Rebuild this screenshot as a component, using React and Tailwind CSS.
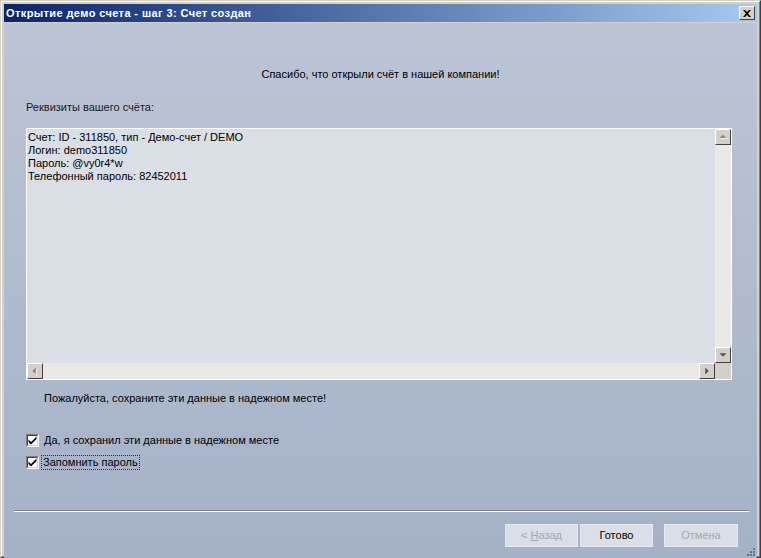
import React from "react";

function ScrollBtn({ dir, disabled, className = "" }) {
  const fill = disabled ? "#8a8a8a" : "#555555";
  const paths = {
    up: "M4 9 L8 5 L12 9 Z",
    down: "M4 6 L8 10 L12 6 Z",
    left: "M9 4 L5 8 L9 12 Z",
    right: "M6 4 L10 8 L6 12 Z",
  };
  return (
    <div
      className={
        "w-[16px] h-[16px] shrink-0 bg-[#d4d0c8] border border-t-white border-l-white border-r-[#404040] border-b-[#404040] flex items-center justify-center " +
        className
      }
    >
      <svg width="14" height="14" viewBox="0 0 16 16">
        {disabled && <path d={paths[dir]} fill="#ffffff" transform="translate(1 1)" />}
        <path d={paths[dir]} fill={fill} />
      </svg>
    </div>
  );
}

function Checkbox() {
  return (
    <div className="w-[13px] h-[13px] shrink-0 border border-t-[#808080] border-l-[#808080] border-r-white border-b-white">
      <div className="w-full h-full bg-white border border-t-[#404040] border-l-[#404040] border-r-[#d4d0c8] border-b-[#d4d0c8] flex items-center justify-center">
        <svg width="9" height="9" viewBox="0 0 9 9">
          <path d="M0.5 3.5 L3 6 L8.5 0.5 L8.5 3 L3 8.5 L0.5 6 Z" fill="#000" />
        </svg>
      </div>
    </div>
  );
}

function Button({ children, disabled }) {
  return (
    <div
      className={
        "h-[23px] flex items-center justify-center bg-[#d9dee7] border border-[#e6e9ee] " +
        (disabled ? "text-[#a3a8b0]" : "text-black")
      }
    >
      {children}
    </div>
  );
}

export default function App() {
  return (
    <div
      className="w-[761px] h-[558px] border border-t-[#d4d0c8] border-l-[#d4d0c8] border-r-[#404040] border-b-[#404040] text-[11px] leading-[13px]"
      style={{ fontFamily: '"Liberation Sans", Arial, sans-serif' }}
    >
      <div className="w-full h-full border border-t-white border-l-white border-r-[#808080] border-b-[#808080] bg-[#d4d0c8] p-[2px] flex flex-col">
        {/* title bar */}
        <div className="h-[18px] shrink-0 flex items-center justify-between bg-[linear-gradient(to_right,#0a246a,#a6caf0)] pl-[2px] pr-[2px]">
          <span className="text-white font-bold text-[11px] tracking-[0.4px]">
            Открытие демо счета - шаг 3: Счет создан
          </span>
          <div className="w-[16px] h-[14px] bg-[#d4d0c8] border border-t-white border-l-white border-r-[#404040] border-b-[#404040] flex items-center justify-center">
            <svg width="8" height="7" viewBox="0 0 8 7">
              <path d="M0 0 L2 0 L4 2 L6 0 L8 0 L5 3.5 L8 7 L6 7 L4 5 L2 7 L0 7 L3 3.5 Z" fill="#000" />
            </svg>
          </div>
        </div>
        {/* content */}
        <div className="mt-[1px] flex-1 flex flex-col bg-[linear-gradient(to_bottom,#bcc5d6,#a4b1c7)] text-black">
          <div className="mt-[45px] h-[13px] text-center">
            Спасибо, что открыли счёт в нашей компании!
          </div>
          <div className="mt-[20px] ml-[22px] h-[13px] text-[#1a1a1a]">Реквизиты вашего счёта:</div>
          {/* text box */}
          <div className="mt-[14px] ml-[22px] w-[706px] h-[252px] border border-white flex flex-col">
            <div className="flex-1 flex min-h-0">
              <div className="flex-1 bg-[#dadee5] pl-[1px] pt-[2px]">
                <div>Счет: ID - 311850, тип - Демо-счет / DEMO</div>
                <div>Логин: demo311850</div>
                <div>Пароль: @vy0r4*w</div>
                <div>Телефонный пароль: 82452011</div>
              </div>
              <div className="w-[16px] flex flex-col bg-[#ebe9e5]">
                <ScrollBtn dir="up" disabled />
                <div className="flex-1" />
                <ScrollBtn dir="down" />
              </div>
            </div>
            <div className="h-[16px] flex shrink-0">
              <div className="flex-1 flex bg-[#ebe9e5]">
                <ScrollBtn dir="left" disabled />
                <div className="flex-1" />
                <ScrollBtn dir="right" />
              </div>
              <div className="w-[16px] bg-[#d4d0c8]" />
            </div>
          </div>
          <div className="mt-[12px] ml-[40px] h-[13px]">
            Пожалуйста, сохраните эти данные в надежном месте!
          </div>
          <div className="mt-[29px] ml-[22px] flex items-center gap-[4px] h-[13px]">
            <Checkbox />
            <span className="ml-[1px]">Да, я сохранил эти данные в надежном месте</span>
          </div>
          <div className="mt-[9px] ml-[22px] flex items-center gap-[4px] h-[13px]">
            <Checkbox />
            <span className="ml-[-1px] px-[1px] outline outline-1 outline-dotted outline-[#333] outline-offset-0">
              Запомнить пароль
            </span>
          </div>
          {/* separator */}
          <div className="mt-[41px] ml-[10px] w-[735px] border-t border-t-[#7d8087] border-b border-b-white" />
          {/* buttons */}
          <div className="mt-[12px] flex ml-[501px]">
            <div className="w-[73px]">
              <Button disabled>
                &lt;&nbsp;<span className="underline">Н</span>азад
              </Button>
            </div>
            <div className="w-[73px] ml-[2px]">
              <Button>Готово</Button>
            </div>
            <div className="w-[74px] ml-[11px]">
              <Button disabled>Отмена</Button>
            </div>
          </div>
          <div className="flex-1 flex justify-end items-end pr-[1px] pb-[1px]">
            <svg width="12" height="12" viewBox="0 0 12 12">
              <g fill="#6b7180">
                <rect x="9" y="1" width="2" height="2" />
                <rect x="6" y="4" width="2" height="2" />
                <rect x="9" y="4" width="2" height="2" />
                <rect x="3" y="7" width="2" height="2" />
                <rect x="6" y="7" width="2" height="2" />
                <rect x="9" y="7" width="2" height="2" />
              </g>
            </svg>
          </div>
        </div>
      </div>
    </div>
  );
}
